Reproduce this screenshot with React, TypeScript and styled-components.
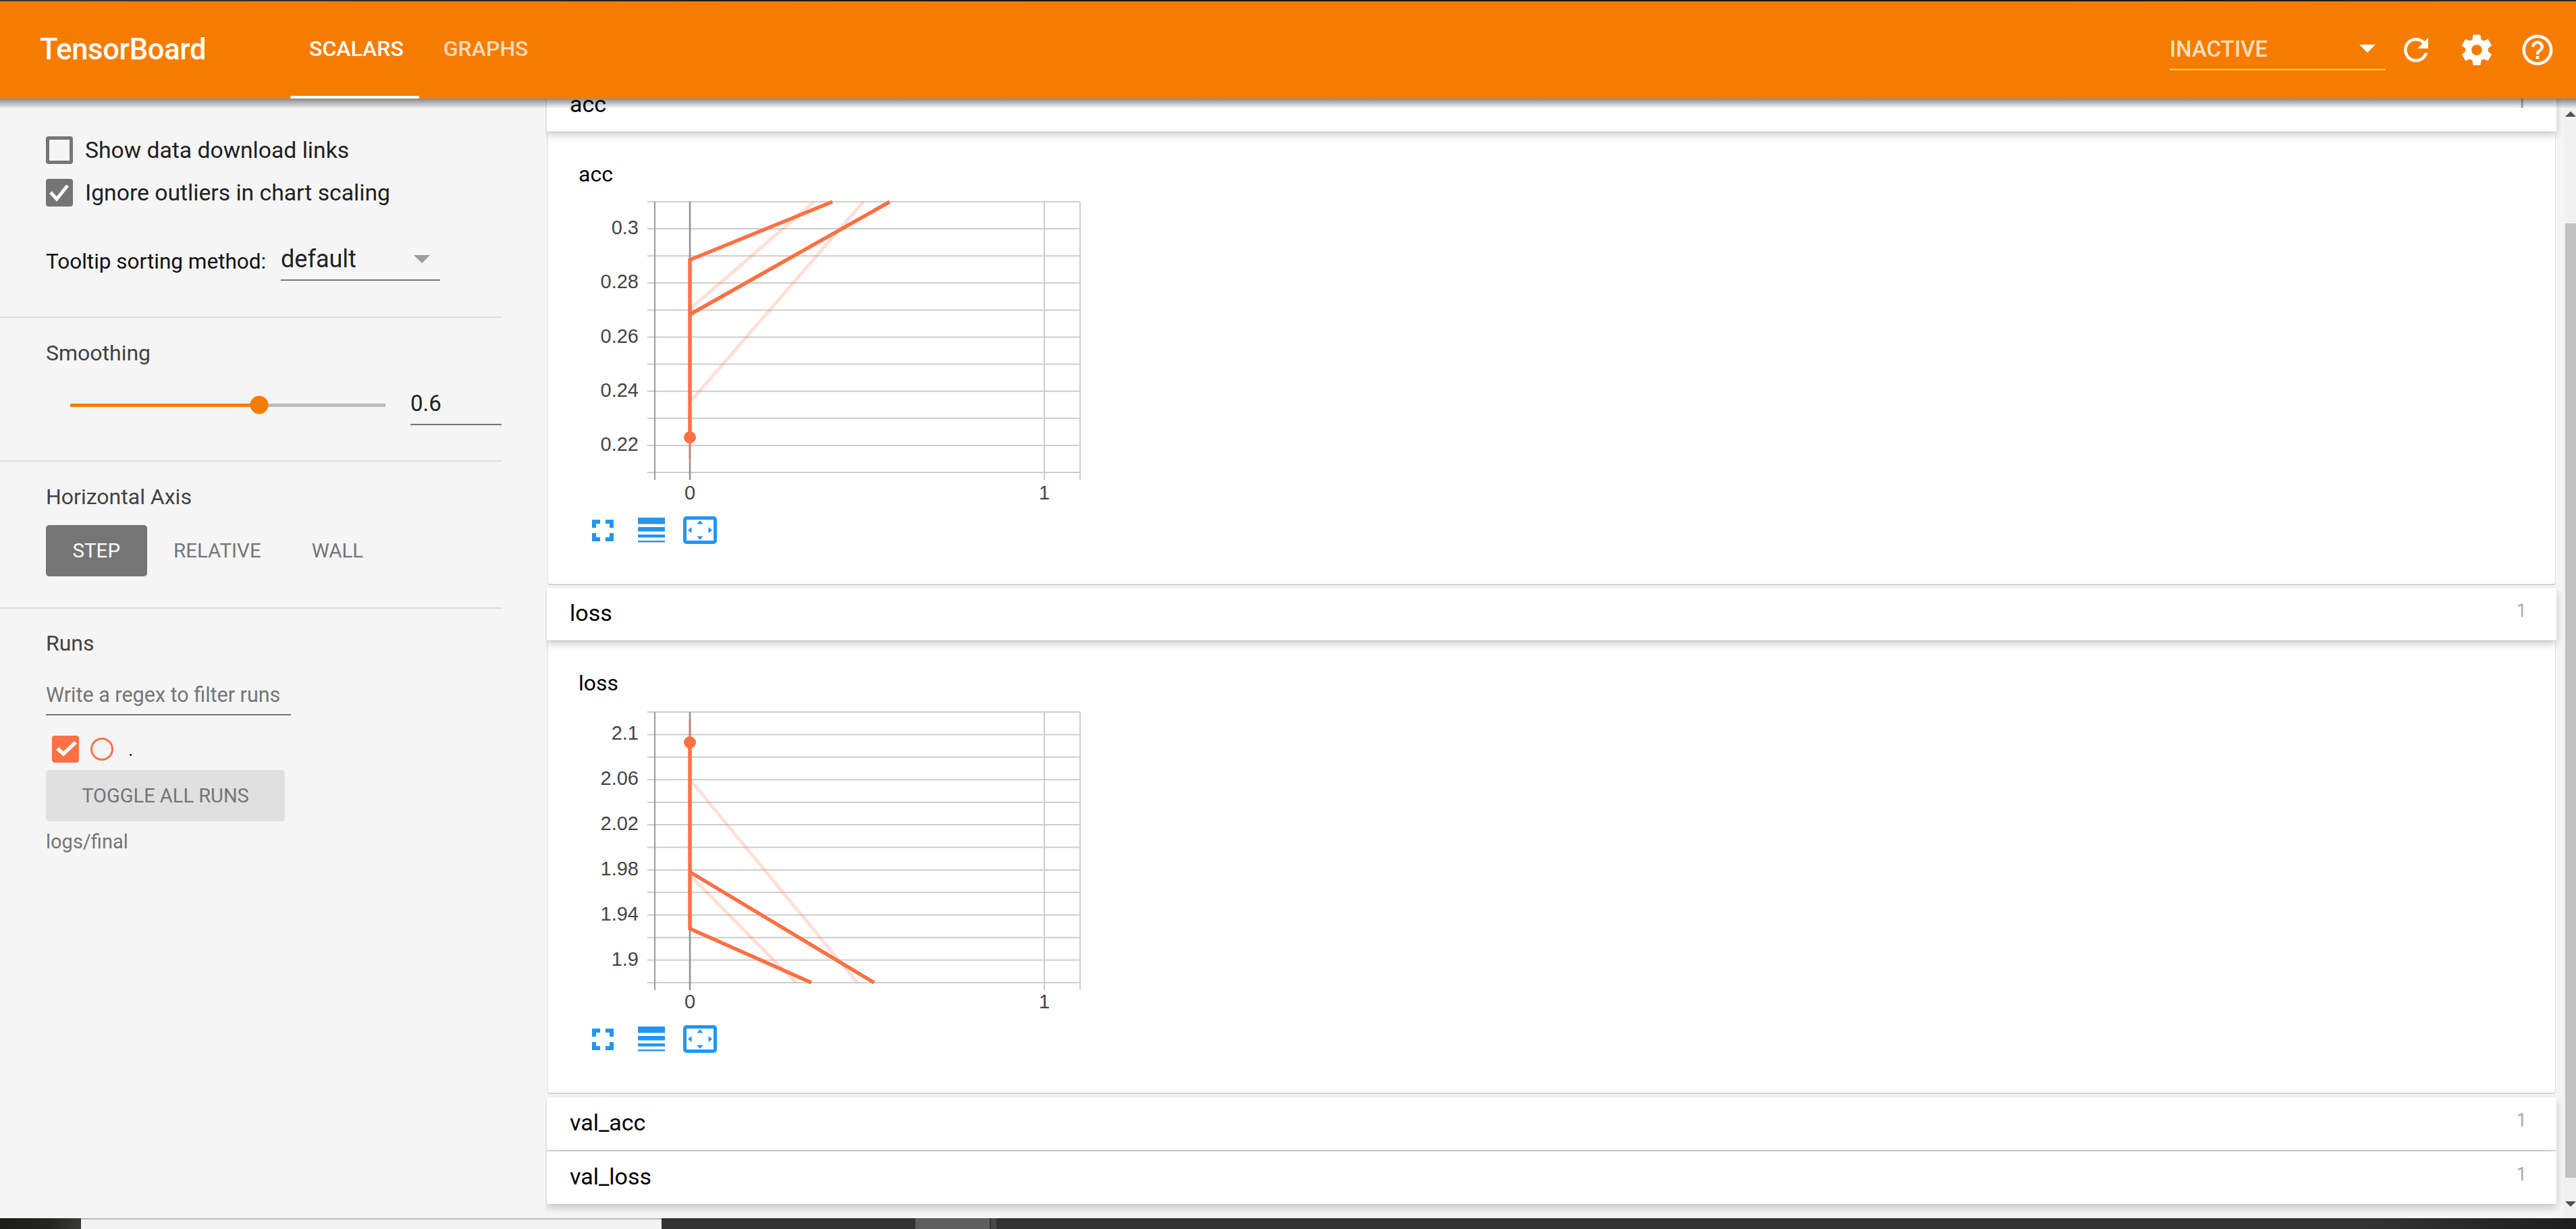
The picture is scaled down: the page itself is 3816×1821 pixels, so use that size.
import React from "react";
import styled, { createGlobalStyle } from "styled-components";

const Global = createGlobalStyle`
  html, body { margin: 0; padding: 0; background: #f5f5f5; overflow: hidden; }
  * { box-sizing: border-box; }
  #root { height: 1821px; }
`;

const Page = styled.div`
  width: 3816px;
  height: 1821px;
  display: flex;
  flex-direction: column;
  overflow: hidden;
  font-family: Roboto, "Noto Sans", sans-serif;
  background: #f5f5f5;
`;

const TopStrip = styled.div`
  height: 2px;
  flex: none;
  background: linear-gradient(90deg, #3a3a3a, #111 40%, #111 80%, #2a2a2a);
`;

const Header = styled.header`
  position: relative;
  z-index: 5;
  flex: none;
  height: 144px;
  background: #f67c00;
  display: flex;
  align-items: stretch;
  padding-left: 59px;
  color: #fff;
  &::after {
    content: "";
    position: absolute;
    left: 0;
    right: 0;
    top: 100%;
    height: 14px;
    background: linear-gradient(180deg, rgba(0, 0, 0, 0.45), rgba(0, 0, 0, 0.03));
    pointer-events: none;
  }
`;

const Brand = styled.div`
  width: 371px;
  font-size: 43.5px;
  font-weight: 500;
  letter-spacing: -0.3px;
  display: flex;
  align-items: center;
  padding-bottom: 2px;
`;

const Tabs = styled.nav`
  display: flex;
  gap: 8px;
`;

const Tab = styled.div<{ $active?: boolean }>`
  padding: 0 23px 0 28px;
  display: flex;
  align-items: center;
  font-size: 32px;
  font-weight: 500;
  color: ${(p) => (p.$active ? "#fff" : "rgba(255,255,255,0.72)")};
  border-bottom: 4px solid ${(p) => (p.$active ? "#fff" : "transparent")};
`;

const HeaderRight = styled.div`
  margin-left: auto;
  display: flex;
  align-items: center;
  padding-right: 30px;
`;

const RunPicker = styled.div`
  width: 320px;
  height: 60px;
  margin-right: 18px;
  display: flex;
  align-items: center;
  justify-content: space-between;
  padding-right: 15px;
  padding-bottom: 2px;
  border-bottom: 2px solid #ffc98f;
  font-size: 33px;
  font-weight: 500;
  color: rgba(255, 255, 255, 0.76);
`;

const PickerCaret = styled.span`
  width: 0;
  height: 0;
  border-left: 12px solid transparent;
  border-right: 12px solid transparent;
  border-top: 12px solid #fff;
`;

const HeaderIcons = styled.div`
  display: flex;
  gap: 36px;
`;

const HeaderIcon = styled.svg`
  width: 54px;
  height: 54px;
  fill: #fff;
  display: block;
`;

const Body = styled.div`
  flex: 1;
  min-height: 0;
  display: flex;
`;

const Sidebar = styled.aside`
  flex: none;
  width: 808px;
  padding-right: 65px;
  background: #f5f5f5;
  color: #212121;
`;

const Section = styled.section<{ $top: number; $bottom: number; $last?: boolean }>`
  padding: ${(p) => p.$top}px 0 ${(p) => p.$bottom}px 68px;
  border-bottom: ${(p) => (p.$last ? "none" : "2px solid #dcdcdc")};
`;

const CheckRow = styled.label<{ $first?: boolean }>`
  display: flex;
  align-items: center;
  height: 41px;
  gap: 18px;
  margin-top: ${(p) => (p.$first ? 0 : 22)}px;
  font-size: 33.7px;
  color: #212121;
`;

const CheckBox = styled.span<{ $checked?: boolean }>`
  width: 40px;
  height: 41px;
  flex: none;
  border-radius: 4px;
  border: ${(p) => (p.$checked ? "none" : "5px solid #757575")};
  background: ${(p) => (p.$checked ? "#757575" : "transparent")};
  display: block;
`;

const CheckMark = styled.svg`
  display: block;
`;

const SortRow = styled.div`
  display: flex;
  align-items: center;
  margin-top: 48px;
  font-size: 31.5px;
  color: #111;
`;

const SortLabel = styled.span`
  width: 348px;
  padding-top: 4px;
`;

const SortSelect = styled.div`
  width: 236px;
  height: 62px;
  display: flex;
  align-items: center;
  justify-content: space-between;
  padding-right: 15px;
  border-bottom: 2px solid #757575;
  font-size: 36px;
  color: #212121;
`;

const SortCaret = styled.span`
  width: 0;
  height: 0;
  border-left: 12px solid transparent;
  border-right: 12px solid transparent;
  border-top: 12px solid #9e9e9e;
`;

const SectionTitle = styled.div`
  height: 36px;
  line-height: 36px;
  font-size: 32px;
  color: #424242;
`;

const SliderRow = styled.div`
  display: flex;
  align-items: center;
  margin-top: 26px;
  padding-left: 36px;
  gap: 37px;
`;

const SliderTrack = styled.div`
  position: relative;
  width: 467px;
  height: 5px;
  margin-top: 3px;
  background: linear-gradient(90deg, #f67c00 60%, #bdbdbd 60%);
`;

const SliderThumb = styled.span`
  position: absolute;
  left: 60%;
  top: 50%;
  width: 27px;
  height: 27px;
  border-radius: 50%;
  background: #f67c00;
  transform: translate(-50%, -50%);
`;

const ValueField = styled.div`
  width: 135px;
  height: 63px;
  display: flex;
  align-items: center;
  border-bottom: 2px solid #757575;
  font-size: 33px;
  color: #212121;
`;

const AxisButtons = styled.div`
  display: flex;
  margin-top: 24px;
`;

const AxisButton = styled.div<{ $active?: boolean }>`
  height: 76px;
  padding: 0 ${(p) => (p.$active ? 39.5 : 35.5)}px 0 39.5px;
  display: flex;
  align-items: center;
  border-radius: 5px;
  font-size: 29.5px;
  background: ${(p) => (p.$active ? "#757575" : "transparent")};
  color: ${(p) => (p.$active ? "#fff" : "#757575")};
`;

const RegexField = styled.div`
  width: 363px;
  height: 60px;
  margin-top: 29px;
  display: flex;
  align-items: center;
  white-space: nowrap;
  border-bottom: 2px solid #757575;
  font-size: 30.5px;
  color: #757575;
`;

const RunRow = styled.div`
  display: flex;
  align-items: center;
  margin: 30px 0 0 9px;
`;

const RunBox = styled.span`
  width: 40px;
  height: 40px;
  border-radius: 4px;
  background: #ff7043;
  display: block;
`;

const RunDot = styled.span`
  width: 34px;
  height: 34px;
  margin-left: 17px;
  border-radius: 50%;
  border: 3px solid #ff7043;
  display: block;
`;

const RunName = styled.span`
  margin-left: 22px;
  font-size: 28px;
  color: #111;
`;

const ToggleButton = styled.div`
  width: 354px;
  height: 76px;
  margin-top: 11px;
  display: flex;
  align-items: center;
  justify-content: center;
  border-radius: 5px;
  background: #e0e0e0;
  color: #757575;
  font-size: 29px;
`;

const LogDir = styled.div`
  margin-top: 12px;
  height: 36px;
  line-height: 36px;
  font-size: 29px;
  color: #757575;
`;

const Main = styled.main`
  flex: 1;
  min-width: 0;
  display: flex;
  overflow: hidden;
  padding-left: 2px;
`;

const Cards = styled.div`
  flex: 1;
  min-width: 0;
  margin-top: -29px;
  padding-right: 11px;
`;

const CategoryRow = styled.div<{ $gap?: number }>`
  position: relative;
  z-index: 1;
  height: 78px;
  margin-bottom: ${(p) => p.$gap ?? 0}px;
  padding: 0 44px 4px 34px;
  display: flex;
  align-items: center;
  justify-content: space-between;
  background: #fff;
  box-shadow: 0 5px 11px rgba(0, 0, 0, 0.2);
  font-size: 34px;
  color: #000;
`;

const CategoryCount = styled.span`
  font-size: 27px;
  color: #aaa;
  margin-top: -6px;
`;

const CardBody = styled.div<{ $gap: number }>`
  height: 672px;
  margin: 0 1px ${(p) => p.$gap}px;
  padding: 44px 0 0 45px;
  background: #fff;
  border: 1px solid #e0e0e0;
  border-bottom: 2px solid #d4d4d4;
  border-radius: 0 0 4px 4px;
`;

const ChartTitle = styled.div`
  height: 36px;
  line-height: 36px;
  font-size: 32px;
  color: #000;
`;

const ChartSvg = styled.svg`
  display: block;
  margin-top: 15px;
`;

const TickLabel = styled.text`
  font-family: "Liberation Sans", Arial, sans-serif;
  font-size: 29px;
  fill: #444;
`;

const ChartTools = styled.div`
  height: 41px;
  margin-left: 20px;
  display: flex;
  align-items: center;
`;

const Tool = styled.svg<{ $gap?: number }>`
  display: block;
  flex: none;
  margin-left: ${(p) => p.$gap ?? 0}px;
  fill: #2196f3;
`;

const ScrollTrack = styled.div`
  flex: none;
  width: 18px;
  padding-top: 19px;
  background: #f1f1f1;
  display: flex;
  flex-direction: column;
  overflow: hidden;
`;

const ScrollArrow = styled.svg`
  display: block;
  flex: none;
  fill: #505050;
  margin-left: 2px;
`;

const ScrollThumb = styled.div`
  height: 1414px;
  margin: 158px 0 35px 2px;
  background: #c1c1c1;
`;

const Taskbar = styled.footer`
  flex: none;
  height: 16px;
  display: flex;
  background: linear-gradient(90deg, #333 0%, #333 92%, #1e1e1e 100%);
`;

const TaskStart = styled.div`
  width: 120px;
  background: linear-gradient(90deg, #1c1c1a, #242422 60%, #3a3a38);
`;

const TaskWindow = styled.div`
  width: 860px;
  background: #f2f2f2;
  border-top: 2px solid #bbb;
`;

const TaskGap = styled.div`
  width: 376px;
`;

const TaskTile = styled.div`
  width: 110px;
  background: #5e5e5e;
`;

const TaskSliver = styled.div`
  width: 8px;
  margin-left: 2px;
  background: #484848;
`;

type ChartProps = {
  title: string;
  top: number;
  steps: number;
  labels: string[];
  main: string[];
  pale: string[];
  dot: number;
  gap: number;
};

const PLOT_HEIGHT = 401;

function Chart({ top, steps, labels, main, pale, dot }: Omit<ChartProps, "title" | "gap">) {
  const bottom = top + PLOT_HEIGHT;
  const lines = Array.from({ length: steps + 1 }, (_, i) => top + (i * PLOT_HEIGHT) / steps);
  return (
    <ChartSvg width={755} height={474} viewBox="0 0 755 474">
      {lines.map((y) => (
        <line key={y} x1={102} x2={743} y1={y} y2={y} stroke="#cdcdcd" strokeWidth={2} />
      ))}
      <line x1={113} x2={113} y1={top} y2={bottom + 11} stroke="#9c9c9c" strokeWidth={2} />
      <line x1={165} x2={165} y1={top} y2={bottom + 11} stroke="#8f8f8f" strokeWidth={2.5} />
      <line x1={690} x2={690} y1={top} y2={bottom + 11} stroke="#cdcdcd" strokeWidth={2} />
      <line x1={743} x2={743} y1={top} y2={bottom + 11} stroke="#cdcdcd" strokeWidth={2} />
      {pale.map((d) => (
        <path key={d} d={d} fill="none" stroke="#ff7043" strokeOpacity={0.22} strokeWidth={5} />
      ))}
      {main.map((d) => (
        <path key={d} d={d} fill="none" stroke="#ff7043" strokeWidth={5.5} />
      ))}
      <circle cx={165} cy={dot} r={9} fill="#ff7043" />
      {labels.map((text, i) => (
        <TickLabel
          key={text}
          x={89}
          y={lines[i * 2 + 1] - 2}
          textAnchor="end"
          dominantBaseline="central"
        >
          {text}
        </TickLabel>
      ))}
      <TickLabel x={165} y={439} textAnchor="middle" dominantBaseline="central">
        0
      </TickLabel>
      <TickLabel x={690} y={439} textAnchor="middle" dominantBaseline="central">
        1
      </TickLabel>
    </ChartSvg>
  );
}

function ChartCard({ title, gap, ...chart }: ChartProps) {
  return (
    <CardBody $gap={gap}>
      <ChartTitle>{title}</ChartTitle>
      <Chart {...chart} />
      <ChartTools>
        <Tool width={32} height={32} viewBox="0 0 32 32">
          <path d="M0 0h12v6H6v6H0zM20 0h12v12h-6V6h-6zM0 20h6v6h6v6H0zM26 20h6v12H20v-6h6z" />
        </Tool>
        <Tool $gap={36} width={40} height={37} viewBox="0 0 40 37">
          <path d="M0 0h40v9.5H0zM0 14h40v6.5H0zM0 25h40v4.5H0zM0 34h40v2.5H0z" />
        </Tool>
        <Tool $gap={27} width={50} height={41} viewBox="0 0 50 41">
          <path
            fillRule="evenodd"
            d="M5 0h40a5 5 0 0 1 5 5v31a5 5 0 0 1-5 5H5a5 5 0 0 1-5-5V5a5 5 0 0 1 5-5zM6 5a1 1 0 0 0-1 1v29a1 1 0 0 0 1 1h38a1 1 0 0 0 1-1V6a1 1 0 0 0-1-1z"
          />
          <path d="M25 6l4.5 5.5h-9zM25 35l-4.5-5.5h9zM7 20.5l5.5-4.500v9zM43 20.5l-5.5 4.500v-9z" />
        </Tool>
      </ChartTools>
    </CardBody>
  );
}

export default function App() {
  return (
    <Page>
      <Global />
      <TopStrip />
      <Header>
        <Brand>TensorBoard</Brand>
        <Tabs>
          <Tab $active>SCALARS</Tab>
          <Tab>GRAPHS</Tab>
        </Tabs>
        <HeaderRight>
          <RunPicker>
            <span>INACTIVE</span>
            <PickerCaret />
          </RunPicker>
          <HeaderIcons>
            <HeaderIcon viewBox="0 0 24 24">
              <path d="M17.65 6.35C16.2 4.9 14.21 4 12 4c-4.42 0-7.99 3.58-7.99 8s3.57 8 7.99 8c3.73 0 6.84-2.55 7.73-6h-2.08c-.82 2.33-3.04 4-5.65 4-3.31 0-6-2.69-6-6s2.69-6 6-6c1.66 0 3.14.69 4.22 1.78L13 11h7V4l-2.35 2.35z" />
            </HeaderIcon>
            <HeaderIcon viewBox="0 0 24 24">
              <path d="M19.43 12.98c.04-.32.07-.64.07-.98s-.03-.66-.07-.98l2.11-1.65c.19-.15.24-.42.12-.64l-2-3.46c-.12-.22-.39-.3-.61-.22l-2.49 1c-.52-.4-1.08-.73-1.69-.98l-.38-2.65C14.46 2.18 14.25 2 14 2h-4c-.25 0-.46.18-.49.42l-.38 2.65c-.61.25-1.17.59-1.69.98l-2.49-1c-.23-.09-.49 0-.61.22l-2 3.46c-.13.22-.07.49.12.64l2.11 1.65c-.04.32-.07.65-.07.98s.03.66.07.98l-2.11 1.65c-.19.15-.24.42-.12.64l2 3.46c.12.22.39.3.61.22l2.49-1c.52.4 1.08.73 1.69.98l.38 2.65c.03.24.24.42.49.42h4c.25 0 .46-.18.49-.42l.38-2.65c.61-.25 1.17-.59 1.69-.98l2.49 1c.23.09.49 0 .61-.22l2-3.46c.12-.22.07-.49-.12-.64l-2.11-1.65zM12 15.5c-1.93 0-3.5-1.57-3.5-3.5s1.57-3.5 3.5-3.5 3.5 1.57 3.5 3.5-1.57 3.5-3.5 3.5z" />
            </HeaderIcon>
            <HeaderIcon viewBox="0 0 24 24">
              <path d="M11 18h2v-2h-2v2zm1-16C6.48 2 2 6.48 2 12s4.48 10 10 10 10-4.48 10-10S17.52 2 12 2zm0 18c-4.41 0-8-3.59-8-8s3.59-8 8-8 8 3.59 8 8-3.59 8-8 8zm0-14c-2.21 0-4 1.79-4 4h2c0-1.1.9-2 2-2s2 .9 2 2c0 2-3 1.75-3 5h2c0-2.25 3-2.5 3-5 0-2.21-1.79-4-4-4z" />
            </HeaderIcon>
          </HeaderIcons>
        </HeaderRight>
      </Header>
      <Body>
        <Sidebar>
          <Section $top={56} $bottom={53}>
            <CheckRow $first>
              <CheckBox />
              Show data download links
            </CheckRow>
            <CheckRow>
              <CheckBox $checked>
                <CheckMark width={40} height={41} viewBox="0 0 40 41">
                  <path d="M7 20l9 10L32 10" fill="none" stroke="#fff" strokeWidth={5} />
                </CheckMark>
              </CheckBox>
              Ignore outliers in chart scaling
            </CheckRow>
            <SortRow>
              <SortLabel>Tooltip sorting method:</SortLabel>
              <SortSelect>
                <span>default</span>
                <SortCaret />
              </SortSelect>
            </SortRow>
          </Section>
          <Section $top={34} $bottom={52}>
            <SectionTitle>Smoothing</SectionTitle>
            <SliderRow>
              <SliderTrack>
                <SliderThumb />
              </SliderTrack>
              <ValueField>0.6</ValueField>
            </SliderRow>
          </Section>
          <Section $top={34} $bottom={46}>
            <SectionTitle>Horizontal Axis</SectionTitle>
            <AxisButtons>
              <AxisButton $active>STEP</AxisButton>
              <AxisButton>RELATIVE</AxisButton>
              <AxisButton>WALL</AxisButton>
            </AxisButtons>
          </Section>
          <Section $top={33} $bottom={0} $last>
            <SectionTitle>Runs</SectionTitle>
            <RegexField>Write a regex to filter runs</RegexField>
            <RunRow>
              <RunBox>
                <CheckMark width={40} height={40} viewBox="0 0 40 40">
                  <path d="M8 19l9 8L35 10" fill="none" stroke="#fff" strokeWidth={5.5} />
                </CheckMark>
              </RunBox>
              <RunDot />
              <RunName>.</RunName>
            </RunRow>
            <ToggleButton>TOGGLE ALL RUNS</ToggleButton>
            <LogDir>logs/final</LogDir>
          </Section>
        </Sidebar>
        <Main>
          <Cards>
            <CategoryRow>
              acc
              <CategoryCount>1</CategoryCount>
            </CategoryRow>
            <ChartCard
              title="acc"
              gap={4}
              top={8}
              steps={10}
              labels={["0.3", "0.28", "0.26", "0.24", "0.22"]}
              main={["M165 357V94L376 8", "M165 175L461 8"]}
              pale={["M165 305L422 8", "M165 167L349 8", "M165 357V389"]}
              dot={357}
            />
            <CategoryRow>
              loss
              <CategoryCount>1</CategoryCount>
            </CategoryRow>
            <ChartCard
              title="loss"
              gap={5}
              top={10}
              steps={12}
              labels={["2.1", "2.06", "2.02", "1.98", "1.94", "1.9"]}
              main={["M165 55V331L345 411", "M165 247L438 411"]}
              pale={["M165 110L413 411", "M165 252L322 411", "M165 55V20"]}
              dot={55}
            />
            <CategoryRow $gap={2}>
              val_acc
              <CategoryCount>1</CategoryCount>
            </CategoryRow>
            <CategoryRow>
              val_loss
              <CategoryCount>1</CategoryCount>
            </CategoryRow>
          </Cards>
          <ScrollTrack>
            <ScrollArrow width={16} height={8} viewBox="0 0 16 8">
              <path d="M8 0l8 8H0z" />
            </ScrollArrow>
            <ScrollThumb />
            <ScrollArrow width={16} height={8} viewBox="0 0 16 8">
              <path d="M0 0h16l-8 8z" />
            </ScrollArrow>
          </ScrollTrack>
        </Main>
      </Body>
      <Taskbar>
        <TaskStart />
        <TaskWindow />
        <TaskGap />
        <TaskTile />
        <TaskSliver />
      </Taskbar>
    </Page>
  );
}
